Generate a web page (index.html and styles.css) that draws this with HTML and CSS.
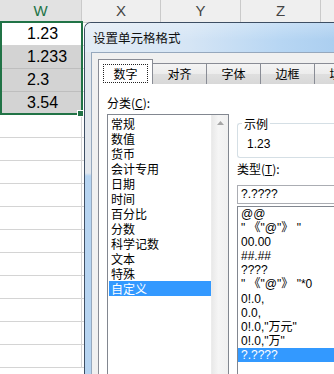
FILE: index.html
```html
<!DOCTYPE html>
<html lang="zh-CN">
<head>
<meta charset="utf-8">
<title>设置单元格格式</title>
<link rel="stylesheet" href="styles.css">
</head>
<body>
<div class="sheet">
  <div class="hdr">
    <div class="hc w">W</div><div class="hc x">X</div><div class="hc y">Y</div><div class="hc z">Z</div><div class="hc aa"></div>
  </div>
  <div class="row"><div class="c w">1.23</div><div class="c x"></div></div>
  <div class="row"><div class="c w gray">1.233</div><div class="c x"></div></div>
  <div class="row"><div class="c w gray">2.3</div><div class="c x"></div></div>
  <div class="row"><div class="c w gray">3.54</div><div class="c x"></div></div>
  <div class="row"><div class="c w"></div><div class="c x"></div></div>
  <div class="row"><div class="c w"></div><div class="c x"></div></div>
  <div class="row"><div class="c w"></div><div class="c x"></div></div>
  <div class="row"><div class="c w"></div><div class="c x"></div></div>
  <div class="row"><div class="c w"></div><div class="c x"></div></div>
  <div class="row"><div class="c w"></div><div class="c x"></div></div>
  <div class="row"><div class="c w"></div><div class="c x"></div></div>
  <div class="row"><div class="c w"></div><div class="c x"></div></div>
  <div class="row"><div class="c w"></div><div class="c x"></div></div>
  <div class="row"><div class="c w"></div><div class="c x"></div></div>
  <div class="row"><div class="c w"></div><div class="c x"></div></div>
  <div class="selbox"></div>
  <div class="handle"></div>
</div>

<div class="dialog">
  <div class="title">设置单元格格式</div>
  <div class="client">
    <div class="tabs">
      <div class="tab on"><div class="focus">数字</div></div>
      <div class="tab">对齐</div>
      <div class="tab">字体</div>
      <div class="tab">边框</div>
      <div class="tab">填充</div>
    </div>
    <div class="panel">
      <div class="cat">
        <div class="lbl">分类(<u>C</u>):</div>
        <div class="list">
          <div class="items">
            <div class="it">常规</div>
            <div class="it">数值</div>
            <div class="it">货币</div>
            <div class="it">会计专用</div>
            <div class="it">日期</div>
            <div class="it">时间</div>
            <div class="it">百分比</div>
            <div class="it">分数</div>
            <div class="it">科学记数</div>
            <div class="it">文本</div>
            <div class="it">特殊</div>
            <div class="it on">自定义</div>
          </div>
          <div class="sb">
            <div class="sbbtn">
              <svg width="7" height="4" viewBox="0 0 7 4"><path d="M0 4 L3.5 0 L7 4 Z" fill="#a6a6a6"/></svg>
            </div>
          </div>
        </div>
      </div>
      <div class="type">
        <div class="group">
          <div class="legend">示例</div>
          <div class="sample">1.23</div>
        </div>
        <div class="lbl2">类型(<u>T</u>):</div>
        <div class="tbox">?.????</div>
        <div class="tlist">
          <div class="ti">@@</div>
          <div class="ti">" 《"@"》 "</div>
          <div class="ti">00.00</div>
          <div class="ti">##.##</div>
          <div class="ti">????</div>
          <div class="ti">" 《"@"》 "*0</div>
          <div class="ti">0!.0,</div>
          <div class="ti">0.0,</div>
          <div class="ti">0!.0,"万元"</div>
          <div class="ti">0!.0,"万"</div>
          <div class="ti on">?.????</div>
        </div>
      </div>
    </div>
  </div>
</div>
</body>
</html>
```

FILE: styles.css
```css
* { box-sizing: border-box; }
html, body { margin: 0; padding: 0; }
body {
  width: 334px;
  height: 374px;
  overflow: hidden;
  position: relative;
  background: #fff;
  font-family: "Liberation Sans", "Noto Sans CJK SC", sans-serif;
  color: #000;
}

/* spreadsheet */
.sheet { position: relative; }
.hdr { display: flex; height: 23px; white-space: nowrap; }
.hc {
  flex: none;
  height: 23px;
  border-right: 1px solid #cacaca;
  border-bottom: 1px solid #cacaca;
  background: #efefef;
  color: #444;
  font: 15px/22px "Liberation Sans", sans-serif;
  text-align: center;
}
.hc.w { width: 82px; background: #e2e2e2; color: #217346; border-bottom: 2px solid #217346; line-height: 21px; }
.hc.x { width: 79px; }
.hc.y { width: 80px; }
.hc.z { width: 80px; }
.hc.aa { width: 80px; }

.row { display: flex; height: 23px; }
.c {
  flex: none;
  height: 23px;
  border-right: 1px solid #d4d4d4;
  border-bottom: 1px solid #d4d4d4;
}
.c.w { width: 82px; font: 16px/22px "Liberation Sans", sans-serif; padding-left: 27px; }
.c.gray { background: #d3d3d3; border-bottom-color: #bebebe; }
.c.x { width: 80px; }

.selbox {
  position: absolute;
  left: 0;
  top: 21px;
  width: 83px;
  height: 94px;
  border: 2px solid #217346;
}
.handle {
  position: absolute;
  left: 77px;
  top: 110px;
  width: 7px;
  height: 7px;
  background: #217346;
  border: 1px solid #fff;
}

/* dialog */
.dialog {
  position: absolute;
  left: 84px;
  top: 22px;
  width: 262px;
  height: 362px;
  border: 1px solid #3d4e63;
  border-right: 0;
  border-bottom: 0;
  border-radius: 7px 0 0 0;
  background: linear-gradient(#e2e7ed 0, #e2e7ed 150px, #b6d4f1 153px, #b6d4f1 100%);
  display: flex;
  flex-direction: column;
  overflow: hidden;
}
.title {
  flex: none;
  height: 29px;
  padding-left: 8px;
  font: 12.5px/29px "Noto Sans CJK SC", sans-serif;
  color: #111;
  background:
    linear-gradient(rgba(255,255,255,0.25), rgba(255,255,255,0) 60%),
    linear-gradient(to right, #e3ecf5 0%, #d5e5f5 40%, #b7d6f3 75%, #a9cdef 100%);
}
.client {
  flex: 1;
  margin-left: 6px;
  border-left: 1px solid #96a8bd;
  border-top: 1px solid #96a8bd;
  background: #f0f0f0;
  padding: 6px 0 0 6px;
  display: flex;
  flex-direction: column;
}
.tabs {
  display: flex;
  align-items: flex-end;
  height: 25px;
  flex: none;
  margin-bottom: -1px;
  position: relative;
  z-index: 1;
  white-space: nowrap;
}
.tab {
  flex: none;
  width: 54px;
  height: 21px;
  border: 1px solid #898c95;
  border-left: 0;
  border-bottom: 0;
  background: linear-gradient(#f4f4f4 0%, #ececec 50%, #dfdfdf 51%, #d8d8d8 100%);
  font: 12px/19px "Noto Sans CJK SC", sans-serif;
  text-align: center;
  color: #000;
}
.tab.on {
  width: 55px;
  height: 25px;
  border-left: 1px solid #898c95;
  background: #fff;
  padding: 4px 4px 1px;
}
.focus {
  height: 19px;
  border: 1px dotted #222;
  line-height: 17px;
}
.panel {
  flex: 1;
  background: #fff;
  border-top: 1px solid #898c95;
  border-left: 1px solid #898c95;
  padding: 11px 0 0 8px;
  display: flex;
  gap: 8px;
}
.cat { flex: none; width: 122px; }
.lbl, .lbl2 {
  font: 12px/15px "Noto Sans CJK SC", sans-serif;
  height: 15px;
  white-space: nowrap;
}
.lbl { margin-bottom: 4px; }
.list {
  height: 280px;
  border: 1px solid #828790;
  display: flex;
}
.items { flex: 1; padding: 1px 0 0 1px; }
.it {
  height: 15px;
  font: 12px/15px "Noto Sans CJK SC", sans-serif;
  padding-left: 2px;
  white-space: nowrap;
}
.it.on, .ti.on { background: #3399ff; color: #fff; }
.sb {
  flex: none;
  width: 17px;
  background: linear-gradient(to right, #e9e9e9, #f5f5f5 40%, #f0f0f0);
  border-left: 1px solid #ececec;
}
.sbbtn {
  height: 17px;
  display: flex;
  align-items: center;
  justify-content: center;
  padding-bottom: 1px;
}

.type { flex: 1; min-width: 0; }
.group {
  margin-top: 28px;
  height: 35px;
  border: 1px solid #d5dfe5;
  border-right: 0;
  border-radius: 3px 0 0 3px;
  padding-left: 9px;
}
.legend {
  width: max-content;
  height: 13px;
  margin: -7px 0 0 -5px;
  padding: 0 2px;
  background: #fff;
  font: 12px/13px "Noto Sans CJK SC", sans-serif;
}
.sample {
  margin-top: 7px;
  font: 12px/14px "Liberation Sans", sans-serif;
}
.lbl2 { margin-top: 3px; }
.tbox {
  margin-top: 9px;
  height: 19px;
  border: 1px solid #abadb3;
  border-right: 0;
  padding-left: 3px;
  font: 12px/17px "Liberation Sans", sans-serif;
  white-space: nowrap;
}
.tlist {
  margin-top: 2px;
  height: 200px;
  border: 1px solid #828790;
  border-right: 0;
}
.ti {
  height: 14.1px;
  font: 12px/14px "Liberation Sans", "Noto Sans CJK SC", sans-serif;
  padding-left: 3px;
  white-space: nowrap;
}
```
